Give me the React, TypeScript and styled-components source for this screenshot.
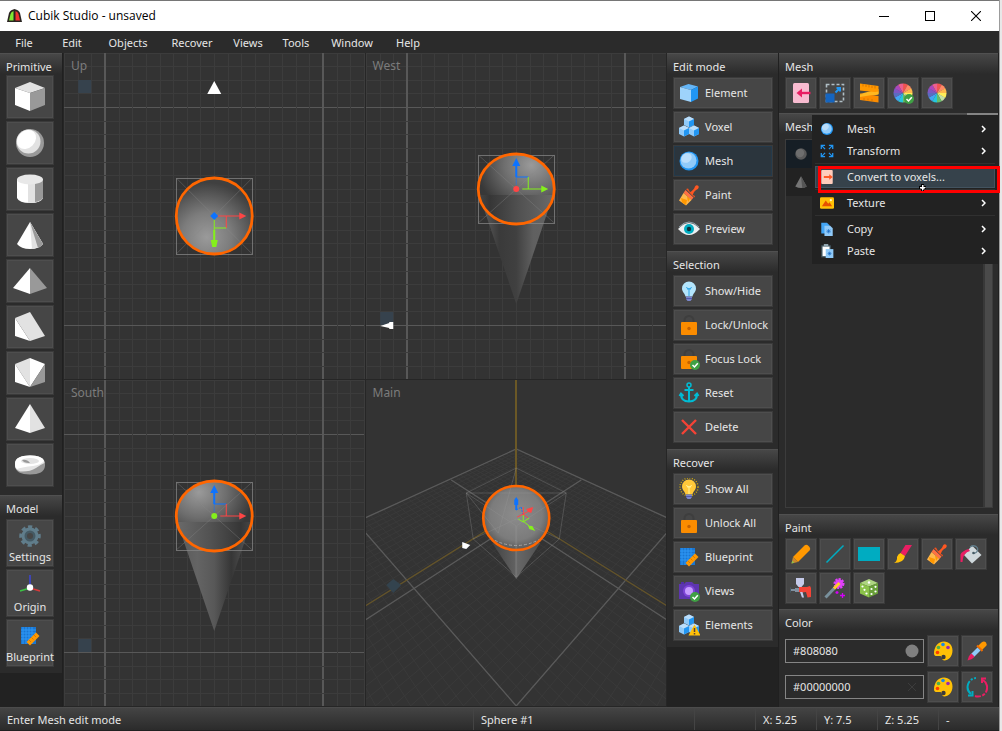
import React from "react";
import styled, { createGlobalStyle } from "styled-components";

const GlobalStyle = createGlobalStyle`
  * { box-sizing: border-box; }
  body { margin: 0; background: #e8e8e8; }
  button, input { font: inherit; color: inherit; }
`;

const font = `"Noto Sans", "Open Sans", sans-serif`;

/* ---------- window frame ---------- */

const Desktop = styled.div`
  min-height: 100vh;
  display: flex;
  padding-right: 3px;
  background: linear-gradient(to left, #e8e8e8 2px, #9c9c9c 2px);
`;

const Window = styled.div`
  flex: 1;
  min-width: 0;
  display: flex;
  flex-direction: column;
  border-top: 1px solid #767676;
  background: #2b2b2b;
  color: #e6e6e6;
  font: 11px/20px ${font};
`;

const TitleBar = styled.header`
  height: 30px;
  display: flex;
  align-items: center;
  padding-left: 7px;
  background: #fff;
  color: #000;
`;

const WindowTitle = styled.h1`
  flex: 1;
  margin: 0 0 0 6px;
  font: 12px/20px "Open Sans", ${font};
`;

const WindowButton = styled.button`
  width: 46px;
  height: 30px;
  display: grid;
  place-items: center;
  padding: 0;
  border: 0;
  background: none;
`;

const MenuBar = styled.nav`
  height: 22px;
  display: flex;
  align-items: center;
  padding-top: 2px;
`;

const MenuButton = styled.button<{ $wide?: boolean }>`
  width: ${(p) => (p.$wide ? 64 : 48)}px;
  padding: 0;
  border: 0;
  background: none;
  line-height: 20px;
  text-align: center;
`;

const Main = styled.main`
  flex: 1;
  display: flex;
  position: relative;
`;

const StatusBar = styled.footer`
  height: 24px;
  display: flex;
  border-top: 1px solid #4b4b4b;
  border-bottom: 1px solid #202020;
  background: linear-gradient(#444, #2b2b2b);
`;

const StatusCell = styled.span<{ $grow?: number }>`
  flex: ${(p) => (p.$grow ? `${p.$grow} 1 0` : "0 0 61px")};
  padding: 2px 7px 0;
  white-space: nowrap;
  & + & { border-left: 1px solid #444; }
`;

/* ---------- panels ---------- */

const Column = styled.aside<{ $width: number }>`
  flex: 0 0 ${(p) => p.$width}px;
  display: flex;
  flex-direction: column;
  background: #222;
  border-right: 1px solid #202020;
`;

const Panel = styled.section<{ $bottom?: number; $grow?: boolean }>`
  flex: ${(p) => (p.$grow ? "1" : "none")};
  display: flex;
  flex-direction: column;
  position: relative;
  padding: 0 5px ${(p) => p.$bottom ?? 6}px 6px;
  border-top: 1px solid #505050;
  background: linear-gradient(#474747, #2b2b2b 20px);
`;

const PanelTitle = styled.h2<{ $height?: number }>`
  height: ${(p) => p.$height ?? 24}px;
  margin: -1px 0 0;
  padding-top: 4px;
  font: inherit;
  line-height: 20px;
  white-space: nowrap;
`;

const Stack = styled.div`
  display: flex;
  flex-direction: column;
  gap: 2px;
`;

const ToolGrid = styled.div`
  display: flex;
  flex-wrap: wrap;
  gap: 2px;
`;

const Tool = styled.button`
  width: 32px;
  height: 32px;
  display: grid;
  place-items: center;
  padding: 0;
  border: 1px solid #3a3a3a;
  box-shadow: inset 0 0 0 1px #4e4e4e;
  background: #464646;
  svg { flex: none; }
`;

const Primitive = styled(Tool)`
  width: 48px;
  height: 44px;
`;

const ModelButton = styled(Tool)`
  width: 48px;
  height: 48px;
  display: flex;
  flex-direction: column;
  align-items: center;
  justify-content: space-between;
  padding: 5px 0 0;
  white-space: nowrap;
  line-height: 18px;
`;

const ActionButton = styled(Tool)<{ $active?: boolean }>`
  width: 100px;
  display: flex;
  align-items: center;
  gap: 5px;
  padding: 0 0 0 4px;
  text-align: left;
  white-space: nowrap;
  ${(p) => p.$active && `background: #2b353d; box-shadow: inset 0 0 0 1px #243a4b;`}
`;

const TopAccent = styled.span`
  position: absolute;
  top: -1px;
  right: 0;
  width: 31px;
  height: 2px;
  background: #858585;
`;

const MeshList = styled.ul`
  flex: 1;
  margin: 2px 0 0;
  padding: 0 9px 0 0;
  list-style: none;
  border: 1px solid #3c3c3c;
  background: linear-gradient(to left, #4a4a4a 7px, #383838 7px, #383838 9px, #2b2b2b 9px);
`;

const MeshRow = styled.li<{ $selected?: boolean }>`
  height: 28px;
  padding: 7px 8px;
  background: ${(p) => (p.$selected ? "#161e25" : "#222")};
`;

const ColorRows = styled.div`
  display: flex;
  flex-direction: column;
  gap: 4px;
  padding-top: 2px;
`;

const ColorRow = styled.div`
  display: flex;
  align-items: center;
  gap: 2px;
`;

const ColorField = styled.label`
  flex: 1;
  position: relative;
  display: block;
  margin-right: 1px;
`;

const ColorInput = styled.input`
  width: 100%;
  height: 24px;
  display: block;
  padding: 0 30px 2px 7px;
  border: 1px solid #858585;
  background: #2b2b2b;
  outline: none;
`;

const Swatch = styled.span`
  position: absolute;
  top: 5px;
  right: 5px;
  width: 14px;
  height: 14px;
  display: grid;
`;

/* ---------- context menu ---------- */

const ContextMenu = styled.div`
  position: absolute;
  z-index: 2;
  top: 62px;
  right: 1px;
  width: 186px;
  padding: 3px 3px 2px;
  background: #222;
`;

const MenuItem = styled.button<{ $active?: boolean }>`
  width: 100%;
  height: 22px;
  display: flex;
  align-items: center;
  padding: 0 8px 0 4px;
  border: 1px solid ${(p) => (p.$active ? "#43535f" : "transparent")};
  background: ${(p) => (p.$active ? "#36424b" : "none")};
  text-align: left;
  svg { flex: none; }
`;

const MenuLabel = styled.span`
  flex: 1;
  padding-left: 13px;
  white-space: nowrap;
`;

const MenuRule = styled.hr`
  height: 1px;
  margin: 1px 0 2px;
  border: 0;
  background: #303030;
`;

const Highlight = styled.div`
  position: absolute;
  z-index: 3;
  top: 113px;
  right: -1px;
  width: 182px;
  height: 27px;
  border: 3px solid #f00;
  pointer-events: none;
`;

const Cursor = styled.svg`
  position: absolute;
  z-index: 4;
  top: 130px;
  right: 72px;
`;

/* ---------- viewports ---------- */

const Views = styled.div`
  flex: 1;
  min-width: 0;
  display: grid;
  grid-template: 1fr 1fr / 1fr 1fr;
  gap: 1px;
  padding: 0 1px 1px;
  background: #262626;
`;

const View = styled.figure`
  position: relative;
  margin: 0;
  min-height: 200px;
  overflow: hidden;
  background: #333;
`;

const ViewLabel = styled.figcaption`
  position: absolute;
  z-index: 1;
  top: 3px;
  left: 7px;
  color: #7c7c7c;
  font-size: 12px;
`;

const Scene = styled.svg`
  position: absolute;
  inset: 0;
  width: 100%;
  height: 100%;
`;

const CELL = 13.625;

function FlatGrid() {
  const lines: React.ReactNode[] = [];
  for (let k = -80; k <= 80; k++) {
    const major = Math.abs(k) % 16 === 8;
    const p = Math.round(k * CELL);
    const stroke = major ? "#585858" : "#3c3c3c";
    lines.push(
      <line key={`v${k}`} x1={p} x2={p} y1={-1100} y2={1100} stroke={stroke} strokeWidth={major ? 2 : 1} />,
      <line key={`h${k}`} y1={p} y2={p} x1={-1100} x2={1100} stroke={stroke} strokeWidth={1} />
    );
  }
  return <g shapeRendering="crispEdges">{lines}</g>;
}

function Centered({ children }: { children: React.ReactNode }) {
  return (
    <Scene aria-hidden="true">
      <svg x="50%" y="50%" overflow="visible">{children}</svg>
    </Scene>
  );
}

function BoxFrame({ top, bottom }: { top: number; bottom: number }) {
  return (
    <g stroke="#8a8a8a" strokeOpacity=".7" fill="none">
      <rect x="-38" y={top} width="76" height={bottom - top} shapeRendering="crispEdges" />
      <path d={`M-38 ${top}L38 ${bottom}M38 ${top}L-38 ${bottom}`} strokeOpacity=".35" />
    </g>
  );
}

const RED = "#ff4545";
const GREEN = "#84f01c";
const BLUE = "#0d73ff";
const ORANGE = "#ff6600";

function UpView() {
  return (
    <Centered>
      <defs>
        <radialGradient id="upBall" cx=".4" cy=".78" r=".72">
          <stop offset="0" stopColor="#9a9a9a" />
          <stop offset=".45" stopColor="#7c7c7c" />
          <stop offset="1" stopColor="#404040" />
        </radialGradient>
      </defs>
      <FlatGrid />
      <rect x="-136" y="-136" width="13" height="13" fill="#36424d" />
      <path d="M0-135L7-122H-7z" fill="#fff" />
      <circle r="38" fill="url(#upBall)" />
      <BoxFrame top={-38} bottom={38} />
      <circle r="38" fill="none" stroke={ORANGE} strokeWidth="2.800" />
      <path d="M3 0H26M12 0V12" stroke={RED} fill="none" />
      <path d="M25-3.500L32 0L25 3.500z" fill={RED} />
      <path d="M0 3V26M0 12H12" stroke={GREEN} fill="none" />
      <path d="M-1 14H1V25H-1zM-3.500 24H3.500L2 31H-2z" fill={GREEN} />
      <path d="M0-4L4 0L0 4L-4 0z" fill={BLUE} />
    </Centered>
  );
}

function SideView({ id, mirrored, marker }: { id: string; mirrored?: boolean; marker?: boolean }) {
  const side = mirrored ? GREEN : RED;
  const dot = mirrored ? RED : GREEN;
  const stops = mirrored
    ? ["#5e5e5e", "#3a3a3a", "#404040", "#606060", "#626262"]
    : ["#5a5a5a", "#646464", "#585858", "#363636", "#565656"];
  return (
    <Centered>
      <defs>
        <linearGradient id={`${id}Cone`}>
          {stops.map((c, i) => (
            <stop key={i} offset={i / 4} stopColor={c} />
          ))}
        </linearGradient>
        <radialGradient id={`${id}Top`} cx={mirrored ? ".7" : ".3"} cy=".16" r=".72">
          <stop offset="0" stopColor="#9a9a9a" />
          <stop offset=".5" stopColor="#6e6e6e" />
          <stop offset="1" stopColor="#383838" />
        </radialGradient>
        <linearGradient id={`${id}Low`} x1={mirrored ? "1" : "0"} x2={mirrored ? "0" : "1"}>
          <stop offset="0" stopColor="#6a6a6a" />
          <stop offset=".45" stopColor="#525252" />
          <stop offset=".85" stopColor="#363636" />
          <stop offset="1" stopColor="#474747" />
        </linearGradient>
      </defs>
      <FlatGrid />
      <rect x="-136" y="96" width="13" height="13" fill="#36424d" />
      {marker && <path d="M-136 110L-127 107V106H-123V113H-127V112z" fill="#fff" />}
      <path d="M-34-12L0 88L34-12z" fill={`url(#${id}Cone)`} />
      <ellipse cy="-27" rx="38" ry="35" fill={`url(#${id}Top)`} />
      <path d="M-38-21H38A38 35 0 0 1 0 8A38 35 0 0 1-38-21z" fill={`url(#${id}Low)`} />
      <BoxFrame top={-61} bottom={7} />
      <ellipse cy="-27" rx="38" ry="35" fill="none" stroke={ORANGE} strokeWidth="2.800" />
      <path d="M0-39H12" stroke={BLUE} />
      <path d="M12-39V-27M6-27H26" stroke={side} />
      <path d="M25-30.500L32-27L25-23.500z" fill={side} />
      <path d="M-1-52H1V-39H-1zM0-58L4-50H-4z" fill={BLUE} />
      <path d="M0-39V-31" stroke={BLUE} strokeOpacity=".5" />
      <circle cy="-27" r="3" fill={dot} />
    </Centered>
  );
}

/* Maps the unit square onto the floor quad T(0,-94) R(160,-21) B(0,163) L(-160,-21). */
function floor(u: number, v: number): string {
  const w = 1 - 0.3016 * (u + v);
  const x = (111.7 * (u - v)) / w;
  const y = (79.3 * (u + v) - 94) / w;
  return `${x.toFixed(1)} ${y.toFixed(1)}`;
}

function MainView() {
  let minor = "";
  for (let i = 0; i <= 44; i++) {
    const t = i / 32;
    minor += `M${floor(t, 0)}L${floor(t, 1.35)}M${floor(0, t)}L${floor(1.35, t)}`;
  }
  return (
    <Centered>
      <defs>
        <radialGradient id="mainBall" cx=".5" cy=".45" r=".56">
          <stop offset="0" stopColor="#8c8c8c" />
          <stop offset=".7" stopColor="#7c7c7c" />
          <stop offset="1" stopColor="#585858" />
        </radialGradient>
        <linearGradient id="mainCone">
          <stop offset="0" stopColor="#424242" />
          <stop offset=".55" stopColor="#666" />
          <stop offset="1" stopColor="#505050" />
        </linearGradient>
      </defs>
      <path d={minor} stroke="#3a3a3a" strokeWidth="1" fill="none" />
      <path
        d="M-160-21L0-94L160-21L0 163zM-65-63L151 77L302 175M65-63L-151 77L-302 175"
        stroke="#5a5a5a" strokeWidth="1.300" fill="none"
      />
      <path d="M0-31L151 63L604 346M0-31L-151 63L-604 346" stroke="#64542a" strokeWidth="1.400" fill="none" />
      <path d="M0-600V-57" stroke="#6b5826" strokeWidth="2" shapeRendering="crispEdges" />
      <path d="M-130 42L-123 36L-115 42L-123 50z" fill="#33434e" />
      <path d="M-24 0L0 36L24 0z" fill="url(#mainCone)" />
      <ellipse cy="-25" rx="33" ry="32" fill="url(#mainBall)" />
      <g stroke="#999" strokeOpacity=".3" fill="none">
        <path d="M-50-50L0-75L50-50L43-4L0 34L-43-4zM-50-50H50M-50-50L0-17L50-50M-50-50L-18-10L0-75M-43-4L0-24L43-4" />
        <path d="M0-17V34" strokeWidth="2" />
      </g>
      <path d="M-26-5Q0 10 26-5" stroke="#a5a5a5" strokeDasharray="3 2" fill="none" />
      <ellipse cy="-25" rx="33" ry="32" fill="none" stroke={ORANGE} strokeWidth="2.600" />
      <path d="M-2-43L0-46L2-43V-38H-2zM-1-38H1V-33H-1z" fill={BLUE} />
      <path d="M0-33L5-36L7-27" stroke={BLUE} strokeDasharray="2 1" fill="none" />
      <path d="M7-36V-27M7-29L13-32M1-26L7-29L12-25" stroke={RED} fill="none" />
      <path d="M10-34L17-36L15-30L12-31z" fill={RED} />
      <path d="M7-28V-22L14-16M2-24L7-21L13-25" stroke={GREEN} fill="none" />
      <path d="M12-17L16-17L19-12L13-14z" fill={GREEN} />
      <path d="M-54-1L-46 2L-50 6L-54 5z" fill="#fff" />
    </Centered>
  );
}

/* ---------- icons ---------- */

const badge = (
  <g>
    <circle cx="17" cy="17" r="5" fill="#3fa044" />
    <path d="M14.500 17L16.500 19L19.800 15.200" stroke="#fff" strokeWidth="1.500" fill="none" />
  </g>
);

const cubes = (
  <g>
    {[[6, 0.5], [1, 9.5], [11, 9.5]].map(([x, y]) => (
      <g key={x} transform={`translate(${x} ${y})`}>
        <path d="M0 2.500L5 0L10 2.500V8.500L5 11L0 8.500z" fill="#90caf9" />
        <path d="M0 2.500L5 0L10 2.500L5 5z" fill="#bbdefb" />
        <path d="M10 2.500L5 5V11L10 8.500z" fill="#2196f3" />
      </g>
    ))}
  </g>
);

const lock = (
  <g>
    <path d="M6.500 8V6.500a4.500 4.500 0 0 1 9 0V8" stroke="#3e3e3e" strokeWidth="2" fill="none" />
    <rect x="3" y="8" width="16" height="13" rx="1" fill="#fb8c00" />
    <circle cx="11" cy="14.500" r="1.700" fill="#c56200" />
  </g>
);

const brush = (
  <g>
    <path d="M11.500 8.500Q16 6 17 2.500Q18.500 .5 20.500 2Q21.500 4.500 18 6Q15.500 7.500 14.500 11.500z" fill="#ff5722" />
    <path d="M8 5L10 4.500L12 8L15 11L17 12L16.500 13.500z" fill="#f4511e" />
    <path d="M7.500 6L15.500 13.500L13.500 16L5.500 9z" fill="#ff7043" />
    <path d="M5.500 9L13.500 16L8 21.500L1 16.500z" fill="#ffb74d" />
    <path d="M3 14L9 16L8 21L4 18.500zM9 12.500L12 15L10 18z" fill="#ff9800" />
  </g>
);

const blueprint = (
  <g>
    <path d="M2 2H17V19H2z" fill="#1976d2" />
    <path d="M4 2V19M7 2V19M10 2V19M13 2V19M2 5H17M2 8H17M2 11H17M2 14H17" stroke="#2f97f5" />
    <path d="M7.500 17L17 7.500L20.500 11L11 20.500z" fill="#ff9800" />
    <path d="M10 15L12 17M12.500 12.500L14.500 14.500M15 10L17 12" stroke="#d97b00" />
  </g>
);

const wheelColors = ["#ef5350", "#ff8a65", "#ffb74d", "#ffee58", "#c5e1a5", "#66bb6a", "#26c6da", "#42a5f5", "#5c6bc0", "#7e57c2", "#ab47bc", "#ec5f8f"];
const wheel = (
  <g>
    {wheelColors.map((c, i) => {
      const a = ((i * 30 - 90) * Math.PI) / 180;
      const b = ((i * 30 - 59) * Math.PI) / 180;
      const pt = (t: number) => `${(11 + 9.5 * Math.cos(t)).toFixed(2)} ${(11 + 9.5 * Math.sin(t)).toFixed(2)}`;
      return <path key={c} d={`M11 11L${pt(a)}A9.500 9.500 0 0 1 ${pt(b)}z`} fill={c} />;
    })}
  </g>
);

const ball = (
  <g>
    <circle cx="11" cy="11" r="9.500" fill="#2196f3" />
    <circle cx="10.500" cy="10.500" r="8" fill="#90caf9" />
    <ellipse cx="8.500" cy="8" rx="5.500" ry="4.500" fill="#bbdefb" transform="rotate(-35 8.500 8)" />
  </g>
);

const bulb = (glass: string, wire: string) => (
  <g>
    <path d="M11 1.500a7 7 0 0 1 7 7c0 3.500-3 5-3.500 8h-7c-.5-3-3.500-4.500-3.500-8a7 7 0 0 1 7-7z" fill={glass} />
    <path d="M8.500 7L10 9.500L11 8L12 9.500L13.500 7M11 9V16" stroke={wire} fill="none" />
    <path d="M8 16.500H14V19L12.500 21H9.500L8 19z" fill="#7986cb" />
    <path d="M8 18.500H14" stroke="#5059a8" />
  </g>
);

const palette = (
  <g>
    <path d="M12 1.500C17 1.500 20.500 5 20.500 10.500C20.500 17 16 20.500 12.500 20.500C9.500 20.500 10.500 17 8.500 16C6.500 15.500 2 17.500 2 13.500C2 7 6 1.500 12 1.500z" fill="#ffc107" />
    <circle cx="11" cy="4.500" r="1.800" fill="#1e88e5" />
    <circle cx="16" cy="7.500" r="1.800" fill="#9c27b0" />
    <circle cx="6.500" cy="7.500" r="1.800" fill="#4caf50" />
    <circle cx="5.500" cy="12.500" r="1.800" fill="#ff3d00" />
    <circle cx="11.500" cy="17" r="2.200" fill="#3a3a3a" />
  </g>
);

const icons: Record<string, React.ReactNode> = {
  element: (
    <g>
      <path d="M2 5L10.500 2L20 4.500L13 8z" fill="#64b5f6" />
      <path d="M2 5L13 8V20L2 17z" fill="#9ed3fb" />
      <path d="M13 8L20 4.500V16.500L13 20z" fill="#2196f3" />
    </g>
  ),
  voxel: cubes,
  mesh: ball,
  paint: brush,
  preview: (
    <g>
      <path d="M0 11Q11-1 22 11Q11 23 0 11z" fill="#eceff1" />
      <path d="M1 9Q11-1 21 9" stroke="#90a4ae" fill="none" />
      <circle cx="11" cy="11" r="5" fill="#00acc1" />
      <circle cx="11" cy="11" r="2.200" fill="#10323c" />
    </g>
  ),
  bulb: bulb("#b3e5fc", "#29a3e8"),
  bulbOn: (
    <g>
      <circle cx="11" cy="9" r="9" stroke="#c9a50f" strokeWidth="1.500" strokeDasharray="1 1.500" fill="none" />
      {bulb("#ffc93a", "#fff59d")}
    </g>
  ),
  lock,
  lockCheck: <g>{lock}{badge}</g>,
  anchor: (
    <g stroke="#00bcd4" fill="none" strokeWidth="2">
      <circle cx="11" cy="3" r="2" strokeWidth="1.500" />
      <path d="M11 5V20M6.500 8H15.500M3 12C3 17 6 19.500 11 19.500S19 17 19 12M1.500 14L3 11.500L5.500 14M16.500 14L19 11.500L20.500 14" />
    </g>
  ),
  cross: <path d="M4 4L18 18M18 4L4 18" stroke="#f44336" strokeWidth="2.400" />,
  blueprint,
  camera: (
    <g>
      <path d="M1 4H6L8 2H14L16 4H21V19H1z" fill="#5e35b1" />
      <path d="M3 2H6V4H3z" fill="#512da8" />
      <circle cx="11" cy="11" r="6" fill="#7e45d8" />
      <circle cx="11" cy="11" r="4" fill="#c79cff" />
      {badge}
    </g>
  ),
  cubesWarn: (
    <g>
      {cubes}
      <path d="M16.500 10.500L22.500 21.500H10.500z" fill="#ffc107" />
      <path d="M16.500 14V18M16.500 19V20.500" stroke="#5d4037" strokeWidth="1.500" />
    </g>
  ),
  importMesh: (
    <g>
      <rect x="3" y="1" width="16" height="20" rx="1.500" fill="#f8bbd0" />
      <path d="M20.500 11H9" stroke="#e91e63" strokeWidth="2.400" />
      <path d="M12 6.500V15.500L6.500 11z" fill="#e91e63" />
    </g>
  ),
  scale: (
    <g>
      <rect x="2.500" y="2.500" width="17" height="17" fill="none" stroke="#b0bec5" strokeWidth="1.600" strokeDasharray="3 2" />
      <rect x="1.500" y="11.500" width="9" height="9" fill="#1565c0" />
      <path d="M11.500 10.500L15 7M12.500 6H16V9.500" stroke="#2196f3" strokeWidth="2" fill="none" />
    </g>
  ),
  ruler: (
    <g>
      <path d="M20.500 7L2 12V16L20.500 12.500z" fill="#ffb820" />
      <path d="M2 1.500L20.500 4V10.500L2 8.500z" fill="#ff9800" />
      <path d="M2 11.500L20.500 14V20.500L2 18z" fill="#fb8c00" />
      <path d="M20.500 9.500L2 12.500V15L20.500 12z" fill="#ffb820" />
      <path d="M5 2V4.500M8 2.500V5M11 3V5.500M14 3.500V6M17 4V6.500M6 16V18M10 16.500V18.500M14 17V19" stroke="#d97700" />
    </g>
  ),
  wheel,
  wheelCheck: <g>{wheel}{badge}</g>,
  pencil: (
    <g>
      <path d="M3 14L14.500 2.500Q16.500 1 18.500 3L19.500 4Q21 6 19.500 7.500L8 19z" fill="#ff9800" />
      <path d="M3 14L8 19L1.500 20.500z" fill="#c98a2e" />
      <path d="M2.200 17.800L4.200 19.800L1.500 20.500z" fill="#8bc34a" />
    </g>
  ),
  line: <path d="M2.500 19.500L19.500 2.500" stroke="#00acc1" strokeWidth="1.600" />,
  rect: <rect x="0" y="4" width="22" height="14" fill="#00acc1" />,
  artBrush: (
    <g>
      <path d="M13.500 2H20L13 13L8.500 10z" fill="#e91e63" />
      <path d="M8.500 10L13 13Q12 20 2 20Q5.500 18 5 14Q6 11 8.500 10z" fill="#ffc107" />
    </g>
  ),
  bucket: (
    <g>
      <path d="M12 2.500L21.500 12L12 20.500L4 12z" fill="#cfd8dc" />
      <path d="M10 4Q15 1 17.500 5Q18.500 9 14 10.500" stroke="#607d8b" strokeWidth="1.300" fill="none" />
      <circle cx="13.500" cy="10" r="1.300" fill="#455a64" />
      <path d="M8.500 6L10 8Q3 9.500 2.500 19H.5V11.500Q2 8 8.500 6z" fill="#e91e63" />
    </g>
  ),
  spray: (
    <g>
      <path d="M6 1H14V7L11.500 10H8.500L6 7z" fill="#c5cae9" />
      <path d="M1 12H5V11H9V15H5V14H1z" fill="#8190a0" />
      <path d="M0 10.500V15.500" stroke="#455a64" strokeWidth="2" />
      <path d="M9 10H17L20 9L21 11V20L17.500 20.500L16 15L12 15.500L9 15z" fill="#f44336" />
      <path d="M10 15L12 20.500H14L12.500 15z" fill="#c5cae9" />
    </g>
  ),
  wand: (
    <g>
      <path d="M1.500 20.500L11 10.500" stroke="#78909c" strokeWidth="3" />
      <circle cx="15" cy="6.500" r="4" stroke="#e040fb" strokeWidth="3" strokeDasharray="2 1" fill="#e040fb" />
      <path d="M10 11.500L15.500 6" stroke="#ffca28" strokeWidth="3" />
      <path d="M18.500 16V21M16 18.500H21M13 14V17M11.500 15.500H14.500" stroke="#d500f9" strokeWidth="1.300" />
    </g>
  ),
  dice: (
    <g>
      <path d="M2 6L11 2L20 6L11 9.500z" fill="#aed581" />
      <path d="M2 6L11 9.500V20.500L2 16.500z" fill="#8bc34a" />
      <path d="M20 6L11 9.500V20.500L20 16.500z" fill="#689f38" />
      <g fill="#fff">
        <circle cx="11" cy="5.500" r="1.200" /><circle cx="4.500" cy="9.500" r="1.100" /><circle cx="6.500" cy="12.800" r="1.100" />
        <circle cx="8.500" cy="16.500" r="1.100" /><circle cx="13.500" cy="12" r="1.100" /><circle cx="17.500" cy="9.800" r="1.100" />
        <circle cx="13.500" cy="17" r="1.100" /><circle cx="17.500" cy="14.500" r="1.100" />
      </g>
    </g>
  ),
  palette,
  dropper: (
    <g>
      <path d="M12 6L15.500 2.500Q18 .5 20 2.500Q21.500 4.500 19.500 6.500L16 10z" fill="#ff9800" />
      <path d="M11 5.500L16.500 11" stroke="#ef6c00" strokeWidth="2" />
      <path d="M11.500 7.500L14.500 10.500L7.500 17.500L4.500 14.500z" fill="#90caf9" />
      <path d="M5.500 13.500L8.500 16.500L6 19L1.500 20.500L3 16z" fill="#e91e63" />
    </g>
  ),
  swap: (
    <g fill="none" strokeWidth="2">
      <path d="M10 2A9 9 0 0 0 5 18" stroke="#00acc1" strokeDasharray="2 1.500 2 1.500 20" />
      <path d="M2 19.500H6.500V15" stroke="#00acc1" />
      <path d="M17 4A9 9 0 0 1 9 20" stroke="#e91e63" strokeDasharray="14 1.500 3 1.500" />
      <path d="M20 2.500H16V7" stroke="#e91e63" />
    </g>
  ),
  transform: (
    <path
      d="M8 8L3 3M2 8V2H8M14 8L19 3M14 2H20V8M8 14L3 19M2 14V20H8M14 14L19 19M20 14V20H14"
      stroke="#2196f3" strokeWidth="2" fill="none"
    />
  ),
  convert: (
    <g>
      <rect x="2" y="0" width="18" height="22" rx="1.500" fill="#ffccbc" />
      <path d="M6 11H16" stroke="#ff5722" strokeWidth="3" />
      <path d="M14.500 6.500V15.500L20 11z" fill="#ff5722" />
    </g>
  ),
  texture: (
    <g>
      <rect x="0" y="2" width="22" height="18" rx="2" fill="#ffc107" />
      <path d="M3 16L9 7L13 12L15 10L19 16z" fill="#e65100" />
      <circle cx="17" cy="6.500" r="1.800" fill="#fff9c4" />
    </g>
  ),
  copy: (
    <g>
      <path d="M2 1H11L15 5V18H2z" fill="#42a5f5" />
      <path d="M7 6H16L20 10V22H7z" fill="#90caf9" />
      <path d="M13.500 11V18M10 14.500H17M11 12L16 17M16 12L11 17" stroke="#1565c0" />
    </g>
  ),
  paste: (
    <g>
      <path d="M2 2H17V21H2z" fill="#455a64" />
      <path d="M4 4H15V19H4z" fill="#fff" />
      <path d="M6 0H13V4H6z" fill="#90a4ae" />
      <path d="M9 8H21V22H9z" fill="#90caf9" />
      <path d="M15 12V18M12 15H18M13 13L17 17M17 13L13 17" stroke="#1565c0" />
    </g>
  ),
  settings: (
    <g>
      <circle cx="11" cy="11" r="8.500" fill="#607d8b" />
      <circle cx="11" cy="11" r="9" fill="none" stroke="#607d8b" strokeWidth="3.500" strokeDasharray="4 3.070" transform="rotate(-102 11 11)" />
      <circle cx="11" cy="11" r="5.500" fill="#455a64" />
      <circle cx="11" cy="11" r="3" fill="#464646" />
    </g>
  ),
  origin: (
    <g strokeWidth="1.500">
      <path d="M11 13V0" stroke="#3d46d8" />
      <path d="M11 13L1 16" stroke="#3bc443" />
      <path d="M11 13L21 16" stroke="#d83a3a" />
      <circle cx="11" cy="12.500" r="3.200" fill="#fff" />
    </g>
  ),
  greyBall: (
    <g>
      <circle cx="11" cy="11" r="9" fill="#5a5a5a" />
      <circle cx="9.500" cy="9.500" r="6.500" fill="#6e6e6e" />
    </g>
  ),
  greyCone: (
    <g>
      <path d="M11 2L20 18Q11 23 2 18z" fill="#757575" />
      <path d="M11 2L20 18Q17 20.500 13 20.500z" fill="#555" />
    </g>
  ),
};

const Icon = ({ name, size = 22 }: { name: string; size?: number }) => (
  <svg width={size} height={size} viewBox="0 0 22 22" aria-hidden="true">{icons[name]}</svg>
);

const shapes: [string, React.ReactNode][] = [
  ["Cube", <><path d="M0 6L15 0L30 6L15 11z" fill="#e2e2e2" /><path d="M0 6L15 11V29L0 23z" fill="#fff" /><path d="M30 6L15 11V29L30 23z" fill="#999" /></>],
  ["Sphere", <><circle cx="15" cy="15" r="14" fill="#999" /><circle cx="13.500" cy="13.500" r="12" fill="#e2e2e2" /><ellipse cx="11.500" cy="11.500" rx="10.500" ry="8.500" transform="rotate(-45 11.500 11.500)" fill="#fff" /></>],
  ["Cylinder", <><path d="M2 5V24Q4 29 15 29Q26 29 28 24V5z" fill="#fff" /><path d="M13 8V29Q26 29 28 24V5z" fill="#e2e2e2" /><path d="M20 8V28Q26 27 28 24V5z" fill="#999" /><ellipse cx="15" cy="5.500" rx="13" ry="5" fill="#e8e8e8" /></>],
  ["Cone", <><path d="M15 2L28 24Q24 29 15 29Q6 29 2 24z" fill="#fff" /><path d="M15 2L28 24Q25 28 17 29z" fill="#e2e2e2" /><path d="M15 2L28 24Q26 27 23 28z" fill="#999" /></>],
  ["Pyramid", <><path d="M15 2L-2 22L15 28z" fill="#fff" /><path d="M15 2L32 22L15 28z" fill="#999" /></>],
  ["Wedge", <><path d="M0 6V24L15 29z" fill="#fff" /><path d="M0 6L15 0L30 24L15 29z" fill="#e2e2e2" /></>],
  ["Corner", <><path d="M15 0L30 6L15 29z" fill="#fff" /><path d="M15 0L0 6L15 29z" fill="#e2e2e2" /><path d="M0 6V24L15 29z" fill="#fff" /><path d="M30 6V24L15 29z" fill="#999" /></>],
  ["Tetrahedron", <><path d="M15 0L0 24L15 29z" fill="#fff" /><path d="M15 0L30 24L15 29z" fill="#e2e2e2" /></>],
  ["Torus", <><path d="M0 14Q0 5.500 15 5.500Q30 5.500 30 14V16Q29 24.500 15 24.500Q1 24.500 0 16z" fill="#999" /><path d="M0 14Q0 5.500 15 5.500Q29 5.500 29.500 13Q25 15 21 18Q15 22 5 21.500Q0 19 0 16z" fill="#e4e4e4" /><path d="M0 14Q0 5.500 15 5.500Q27 5.500 29 11Q26 15 18 16Q8 17 2 19Q0 17 0 14z" fill="#fff" /><ellipse cx="15" cy="11" rx="9" ry="3" fill="#e4e4e4" /><path d="M7 10Q12 9 15 13Q9 13.500 7 10z" fill="#999" /></>],
];

/* ---------- data ---------- */

const menus: [string, boolean?][] = [["File"], ["Edit"], ["Objects", true], ["Recover", true], ["Views"], ["Tools"], ["Window", true], ["Help"]];

const actionPanels: { title: string; items: [string, string, boolean?][] }[] = [
  { title: "Edit mode", items: [["Element", "element"], ["Voxel", "voxel"], ["Mesh", "mesh", true], ["Paint", "paint"], ["Preview", "preview"]] },
  { title: "Selection", items: [["Show/Hide", "bulb"], ["Lock/Unlock", "lock"], ["Focus Lock", "lockCheck"], ["Reset", "anchor"], ["Delete", "cross"]] },
  { title: "Recover", items: [["Show All", "bulbOn"], ["Unlock All", "lock"], ["Blueprint", "blueprint"], ["Views", "camera"], ["Elements", "cubesWarn"]] },
];

const meshTools = [["Import mesh", "importMesh"], ["Scale", "scale"], ["Measure", "ruler"], ["Apply colours", "wheelCheck"], ["Colours", "wheel"]];
const paintTools = [["Pencil", "pencil"], ["Line", "line"], ["Rectangle", "rect"], ["Brush", "artBrush"], ["Wide brush", "paint"], ["Fill", "bucket"], ["Spray", "spray"], ["Magic wand", "wand"], ["Noise", "dice"]];

const Chevron = () => (
  <svg width="5" height="8" viewBox="0 0 5 8" aria-hidden="true">
    <path d="M1 1L4 4L1 7" stroke="#fff" strokeWidth="1.500" fill="none" />
  </svg>
);

const Entry = ({ label, icon, active }: { label: string; icon: string; active?: boolean }) => (
  <MenuItem role="menuitem" $active={active}>
    <Icon name={icon} size={14} />
    <MenuLabel>{label}</MenuLabel>
    {!active && <Chevron />}
  </MenuItem>
);

export default function App() {
  return (
    <Desktop>
      <GlobalStyle />
      <Window>
        <TitleBar>
          <svg width="15" height="14" viewBox="0 0 15 14" aria-hidden="true">
            <path d="M0 13L2 4Q3 1 7.500 0Q12 1 13 4L15 13z" fill="#2a2420" />
            <path d="M2 11.500L3.500 5Q4 3 6.500 2V11.500z" fill="#7fe832" />
            <path d="M13 11.500L11.500 5Q11 3 8.500 2V11.500z" fill="#f03030" />
          </svg>
          <WindowTitle>Cubik Studio - unsaved</WindowTitle>
          <WindowButton aria-label="Minimize">
            <svg width="10" height="10" shapeRendering="crispEdges"><path d="M0 5.500H10" stroke="#000" /></svg>
          </WindowButton>
          <WindowButton aria-label="Maximize">
            <svg width="10" height="10" shapeRendering="crispEdges"><rect x=".5" y=".5" width="9" height="9" fill="none" stroke="#000" /></svg>
          </WindowButton>
          <WindowButton aria-label="Close">
            <svg width="10" height="10"><path d="M0 0L10 10M10 0L0 10" stroke="#000" strokeWidth="1.100" /></svg>
          </WindowButton>
        </TitleBar>

        <MenuBar>
          {menus.map(([label, wide]) => (
            <MenuButton key={label} $wide={wide}>{label}</MenuButton>
          ))}
        </MenuBar>

        <Main>
          <Column $width={63}>
            <Panel $bottom={8}>
              <PanelTitle $height={22}>Primitive</PanelTitle>
              <Stack>
                {shapes.map(([label, art]) => (
                  <Primitive key={label} aria-label={label}>
                    <svg width="30" height="30" viewBox="0 0 30 30" overflow="visible" aria-hidden="true">{art}</svg>
                  </Primitive>
                ))}
              </Stack>
            </Panel>
            <Panel>
              <PanelTitle>Model</PanelTitle>
              <Stack>
                <ModelButton><Icon name="settings" />Settings</ModelButton>
                <ModelButton><Icon name="origin" />Origin</ModelButton>
                <ModelButton><Icon name="blueprint" />Blueprint</ModelButton>
              </Stack>
            </Panel>
          </Column>

          <Views>
            <View><ViewLabel>Up</ViewLabel><UpView /></View>
            <View><ViewLabel>West</ViewLabel><SideView id="west" mirrored marker /></View>
            <View><ViewLabel>South</ViewLabel><SideView id="south" /></View>
            <View><ViewLabel>Main</ViewLabel><MainView /></View>
          </Views>

          <Column $width={111}>
            {actionPanels.map((panel) => (
              <Panel key={panel.title}>
                <PanelTitle>{panel.title}</PanelTitle>
                <Stack>
                  {panel.items.map(([label, icon, active]) => (
                    <ActionButton key={label} $active={active}>
                      <Icon name={icon} />{label}
                    </ActionButton>
                  ))}
                </Stack>
              </Panel>
            ))}
          </Column>

          <Column $width={220}>
            <Panel $bottom={4}>
              <PanelTitle>Mesh</PanelTitle>
              <ToolGrid>
                {meshTools.map(([label, icon]) => (
                  <Tool key={label} aria-label={label}><Icon name={icon} /></Tool>
                ))}
              </ToolGrid>
            </Panel>
            <Panel $grow>
              <TopAccent />
              <PanelTitle>Mesh</PanelTitle>
              <MeshList>
                <MeshRow $selected><Icon name="greyBall" size={14} /></MeshRow>
                <MeshRow><Icon name="greyCone" size={14} /></MeshRow>
              </MeshList>
            </Panel>
            <Panel $bottom={5}>
              <PanelTitle>Paint</PanelTitle>
              <ToolGrid>
                {paintTools.map(([label, icon]) => (
                  <Tool key={label} aria-label={label}><Icon name={icon} /></Tool>
                ))}
              </ToolGrid>
            </Panel>
            <Panel $bottom={4}>
              <PanelTitle>Color</PanelTitle>
              <ColorRows>
                <ColorRow>
                  <ColorField>
                    <ColorInput aria-label="Primary color" defaultValue="#808080" />
                    <Swatch><svg viewBox="0 0 14 14"><circle cx="7" cy="7" r="6.500" fill="#808080" /></svg></Swatch>
                  </ColorField>
                  <Tool aria-label="Pick primary color"><Icon name="palette" /></Tool>
                  <Tool aria-label="Eyedropper"><Icon name="dropper" /></Tool>
                </ColorRow>
                <ColorRow>
                  <ColorField>
                    <ColorInput aria-label="Secondary color" defaultValue="#00000000" />
                    <Swatch><svg viewBox="0 0 14 14"><path d="M3 3L11 11M11 3L3 11" stroke="#3c3c3c" /></svg></Swatch>
                  </ColorField>
                  <Tool aria-label="Pick secondary color"><Icon name="palette" /></Tool>
                  <Tool aria-label="Swap colors"><Icon name="swap" /></Tool>
                </ColorRow>
              </ColorRows>
            </Panel>
          </Column>

          <ContextMenu role="menu">
            <Entry label="Mesh" icon="mesh" />
            <Entry label="Transform" icon="transform" />
            <MenuRule />
            <Entry label="Convert to voxels..." icon="convert" active />
            <MenuRule />
            <Entry label="Texture" icon="texture" />
            <MenuRule />
            <Entry label="Copy" icon="copy" />
            <Entry label="Paste" icon="paste" />
          </ContextMenu>
          <Highlight />
          <Cursor width="9" height="9" viewBox="0 0 9 9" shapeRendering="crispEdges" aria-hidden="true">
            <path d="M3 1H6V3H8V6H6V8H3V6H1V3H3z" fill="#000" />
            <path d="M4 2H5V4H7V5H5V7H4V5H2V4H4zM3 4H6V5H3z" fill="#fff" stroke="#fff" strokeWidth=".5" />
          </Cursor>
        </Main>

        <StatusBar>
          <StatusCell $grow={459}>Enter Mesh edit mode</StatusCell>
          <StatusCell $grow={206}>Sphere #1</StatusCell>
          <StatusCell />
          <StatusCell>X: 5.25</StatusCell>
          <StatusCell>Y: 7.5</StatusCell>
          <StatusCell>Z: 5.25</StatusCell>
          <StatusCell>-</StatusCell>
        </StatusBar>
      </Window>
    </Desktop>
  );
}
